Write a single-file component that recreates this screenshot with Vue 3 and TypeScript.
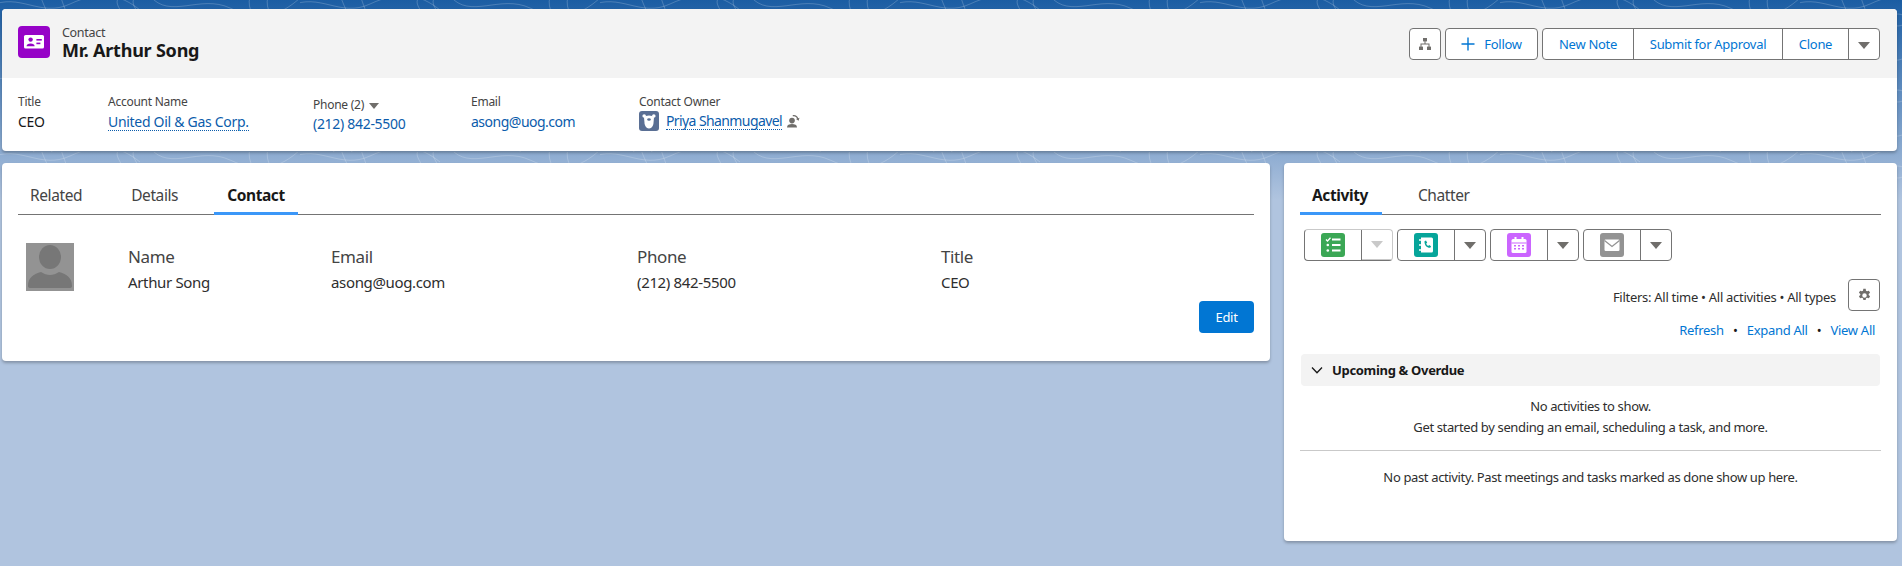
<script setup lang="ts">
const fields = [
  { label: 'Name', value: 'Arthur Song', cls: 'c-name' },
  { label: 'Email', value: 'asong@uog.com', cls: 'c-email' },
  { label: 'Phone', value: '(212) 842-5500', cls: 'c-phone' },
  { label: 'Title', value: 'CEO', cls: 'c-title' },
]
const contours = [
  'M-10 6C20 -8 40 18 70 4S120 -6 140 10',
  'M150 -4C170 20 200 -6 230 8S280 16 300 -2',
  'M20 60C50 40 80 72 110 56S150 50 170 66',
  'M190 54C220 74 250 44 280 60',
  'M40 -6C44 10 52 14 48 30',
  'M60 -6C64 10 70 14 66 30',
  'M250 -4C246 12 258 16 254 30',
  'M268 -4C264 12 276 16 272 30',
  'M120 -4C110 6 130 12 118 24',
  'M136 -4C126 6 146 12 134 24',
  'M30 46C34 58 28 66 34 76',
  'M48 46C52 58 46 66 52 76',
  'M220 44C216 56 226 66 220 76',
  'M90 20a8 6 0 1 0 16 0a8 6 0 1 0 -16 0',
  'M205 60a5 6 0 1 0 10 0a5 6 0 1 0 -10 0',
]
</script>

<template>
  <div class="page">
    <svg class="topo" width="1902" height="200" aria-hidden="true">
      <defs>
        <pattern id="topo" width="300" height="76" patternUnits="userSpaceOnUse">
          <path v-for="(d, i) in contours" :key="i" :d="d" fill="none" stroke="#fff" stroke-opacity=".2" stroke-width="1" />
        </pattern>
      </defs>
      <rect width="1902" height="200" fill="url(#topo)" />
    </svg>

    <section class="card highlights">
      <header class="hl-top">
        <div class="record">
          <span class="rec-icon">
            <svg viewBox="0 0 32 32" width="32" height="32">
              <rect x="6" y="9" width="20" height="13.5" rx="1.6" fill="#fff" />
              <circle cx="12.6" cy="13.6" r="2.2" fill="#9602c7" />
              <path d="M8.6 20.3c0-2 1.6-2.9 4-2.9s4 .9 4 2.9z" fill="#9602c7" />
              <rect x="18.4" y="13" width="5.4" height="1.6" fill="#9602c7" />
              <rect x="18.4" y="16.6" width="4" height="1.6" fill="#9602c7" />
            </svg>
          </span>
          <div>
            <div class="rec-type">Contact</div>
            <h1 class="rec-name">Mr. Arthur Song</h1>
          </div>
        </div>
        <div class="actions">
          <button class="btn square">
            <svg viewBox="0 0 14 14" width="14" height="14" fill="#706e6b">
              <rect x="5" y="1" width="4" height="3.4" />
              <rect x="1" y="9.6" width="4" height="3.4" />
              <rect x="9" y="9.6" width="4" height="3.4" />
              <path d="M6.5 4h1v2.5H11.5V10h-1V7.5h-7V10h-1V6.5h4z" />
            </svg>
          </button>
          <button class="btn follow">
            <svg viewBox="0 0 14 14" width="14" height="14"><path d="M7 .5v13M.5 7h13" stroke="#0176d3" stroke-width="1.4" /></svg>
            Follow
          </button>
          <div class="btn-group">
            <button class="seg w1">New Note</button>
            <button class="seg w2">Submit for Approval</button>
            <button class="seg w3">Clone</button>
            <button class="seg w4"><i class="caret"></i></button>
          </div>
        </div>
      </header>
      <div class="hl-fields">
        <div class="hf f1"><div class="hf-l">Title</div><div class="hf-v">CEO</div></div>
        <div class="hf f2"><div class="hf-l">Account Name</div><a class="hf-v link dotted">United Oil &amp; Gas Corp.</a></div>
        <div class="hf f3 drop"><div class="hf-l">Phone (2) <i class="caret small"></i></div><a class="hf-v link">(212) 842-5500</a></div>
        <div class="hf f4"><div class="hf-l">Email</div><a class="hf-v link">asong@uog.com</a></div>
        <div class="hf f5">
          <div class="hf-l">Contact Owner</div>
          <div class="owner">
            <svg class="bear" viewBox="0 0 20 20" width="20" height="20">
              <rect width="20" height="20" rx="3" fill="#5a6f94" />
              <circle cx="5.2" cy="5" r="1.8" fill="#fff" />
              <circle cx="14.8" cy="5" r="1.8" fill="#fff" />
              <path d="M5 6.500C6 3.800 14 3.800 15 6.500L14.400 13C13.800 16 11.600 17.500 10 17.500S6.200 16 5.600 13z" fill="#fff" />
              <ellipse cx="10" cy="8.500" rx="1.800" ry="1.300" fill="#5a6f94" />
            </svg>
            <a class="hf-v link dotted">Priya Shanmugavel</a>
            <svg class="chown" viewBox="0 0 14 14" width="14" height="14" fill="#706e6b">
              <circle cx="6" cy="6.600" r="2.800" />
              <path d="M1 13.500c0-2.500 2.200-3.400 5-3.400s5 .9 5 3.400z" />
              <path d="M6.600 1.200c2.600-.7 5 .7 5.700 3l1.200-.4-.9 3-2.600-1.800 1.100-.4c-.5-1.600-2.300-2.700-4.100-2.200z" />
            </svg>
          </div>
        </div>
      </div>
    </section>

    <main class="columns">
      <section class="card left">
        <nav class="tabs l-tabs">
          <span class="tab">Related</span>
          <span class="tab">Details</span>
          <span class="tab active">Contact</span>
        </nav>
        <div class="contact-row">
          <svg class="avatar" viewBox="0 0 48 48" width="48" height="48">
            <rect width="48" height="48" fill="#939393" />
            <ellipse cx="24" cy="14" rx="11" ry="12" fill="#777" />
            <path d="M2 43c0-9 6-12 13-14 3 2 6 3 9 3s6-1 9-3c7 2 13 5 13 14 0 1.500-1 2-3 2H5c-2 0-3-.5-3-2z" fill="#777" />
          </svg>
          <div v-for="f in fields" :key="f.label" class="cf" :class="f.cls">
            <div class="cf-l">{{ f.label }}</div>
            <div class="cf-v">{{ f.value }}</div>
          </div>
        </div>
        <div class="edit-row"><button class="edit">Edit</button></div>
      </section>

      <section class="card right">
        <nav class="tabs r-tabs">
          <span class="tab active">Activity</span>
          <span class="tab">Chatter</span>
        </nav>
        <div class="pubs">
          <div class="pub">
            <span class="pub-main">
              <svg viewBox="0 0 24 24" width="24" height="24">
                <rect width="24" height="24" rx="3" fill="#3ba755" />
                <path d="M5 6.500l1.500 1.500 3-3.200" fill="none" stroke="#fff" stroke-width="1.300" />
                <path d="M11 6.500h8.500M11 12h8.500M11 17.500h8.500" stroke="#fff" stroke-width="2" />
                <circle cx="6.800" cy="12" r="1.300" fill="#fff" /><circle cx="6.800" cy="17.500" r="1.300" fill="#fff" />
              </svg>
            </span>
            <span class="pub-drop off"><i class="caret"></i></span>
          </div>
          <div class="pub">
            <span class="pub-main">
              <svg viewBox="0 0 24 24" width="24" height="24">
                <rect width="24" height="24" rx="3" fill="#06a59a" />
                <path d="M7 4.500h10.500a1.500 1.500 0 0 1 1.500 1.500v12a1.500 1.500 0 0 1-1.500 1.500H7z" fill="#fff" />
                <path d="M5 7h2.500M5 12h2.500M5 17h2.500" stroke="#fff" stroke-width="1.500" />
                <path d="M10.500 8.200l1.500-.7 1.200 2.200-1 .8c.3 1.200 1 2 2 2.400l.9-.9 2 1.300-.8 1.500c-3.500.2-6-2.800-5.800-6.600z" fill="#06a59a" />
              </svg>
            </span>
            <span class="pub-drop"><i class="caret"></i></span>
          </div>
          <div class="pub">
            <span class="pub-main">
              <svg viewBox="0 0 24 24" width="24" height="24">
                <rect width="24" height="24" rx="3" fill="#cb65ff" />
                <rect x="4.500" y="6" width="15" height="14" rx="1.500" fill="#fff" />
                <rect x="4.500" y="9.500" width="15" height="1" fill="#cb65ff" />
                <rect x="7.500" y="4" width="2" height="3.500" fill="#fff" /><rect x="14.500" y="4" width="2" height="3.500" fill="#fff" />
                <path d="M7 12h2v1.500H7zM11 12h2v1.500h-2zM15 12h2v1.500h-2zM7 15h2v1.500H7zM11 15h2v1.500h-2zM15 15h2v1.500h-2z" fill="#cb65ff" />
              </svg>
            </span>
            <span class="pub-drop"><i class="caret"></i></span>
          </div>
          <div class="pub">
            <span class="pub-main">
              <svg viewBox="0 0 24 24" width="24" height="24">
                <rect width="24" height="24" rx="3" fill="#939393" />
                <rect x="4.500" y="6.500" width="15" height="11.500" rx="1.200" fill="#fff" />
                <path d="M4.500 7.500L12 13.500l7.500-6" fill="none" stroke="#939393" stroke-width="1.300" />
              </svg>
            </span>
            <span class="pub-drop"><i class="caret"></i></span>
          </div>
        </div>
        <div class="filters">
          <span class="filter-text">Filters: All time • All activities • All types</span>
          <button class="btn square gear">
            <svg viewBox="0 0 14 14" width="15" height="15">
              <path fill="#706e6b" fill-rule="evenodd" d="M5.900.8h2.200l.3 1.700 1 .6 1.700-.6 1.100 1.900-1.300 1.100v1.100l1.300 1.100-1.100 1.900-1.700-.6-1 .6-.3 1.700H5.900l-.3-1.700-1-.6-1.700.6-1.100-1.900 1.300-1.100V5.500L1.800 4.400l1.100-1.900 1.700.6 1-.6zM7 4.900a2.100 2.100 0 1 0 0 4.200 2.100 2.100 0 0 0 0-4.200z" />
            </svg>
          </button>
        </div>
        <div class="links">
          <a>Refresh</a><span class="dot">•</span><a>Expand All</a><span class="dot">•</span><a>View All</a>
        </div>
        <div class="section-bar">
          <svg viewBox="0 0 14 14" width="14" height="14"><path d="M2 4.500L7 9.800l5-5.300" fill="none" stroke="#181818" stroke-width="1.300" /></svg>
          <span>Upcoming &amp; Overdue</span>
        </div>
        <div class="empty upcoming">
          <p>No activities to show.</p>
          <p>Get started by sending an email, scheduling a task, and more.</p>
        </div>
        <div class="empty past"><p>No past activity. Past meetings and tasks marked as done show up here.</p></div>
      </section>
    </main>
  </div>
</template>

<style>
html, body { margin: 0; background: #b0c4df; }
</style>

<style scoped>
* { box-sizing: border-box; }
.page {
  position: relative;
  width: 1902px;
  height: 566px;
  overflow: hidden;
  padding: 9px 5px 0 2px;
  background: linear-gradient(180deg, #1b5da3 0, #b0c4df 200px);
  font-family: "Noto Sans", "Open Sans", sans-serif;
  color: #181818;
  font-size: 13px;
}
.topo { position: absolute; left: 0; top: 0; }
.card {
  position: relative;
  background: #fff;
  border-radius: 4px;
  box-shadow: 0 2px 3px rgba(0, 0, 0, .25);
}
.highlights { height: 142px; overflow: hidden; }
.hl-top {
  height: 69px;
  background: #f3f3f3;
  display: flex;
  justify-content: space-between;
  padding: 17px 17px 0 16px;
}
.record { display: flex; gap: 12px; }
.rec-icon { width: 32px; height: 32px; border-radius: 4px; background: #9602c7; display: block; }
.rec-icon svg { display: block; }
.rec-type { font-size: 12.500px; line-height: 15px; color: #444; margin-top: -1px; letter-spacing: -.3px; }
.rec-name { margin: 0; font-size: 18px; line-height: 20px; font-weight: 700; letter-spacing: -.22px; }
.actions { display: flex; gap: 4px; padding-top: 2px; height: 34px; }
.btn {
  height: 32px;
  background: #fff;
  border: 1px solid #747474;
  border-radius: 4px;
  font: inherit;
  padding: 0;
  color: #0176d3;
  display: flex;
  align-items: center;
  justify-content: center;
  letter-spacing: -.3px;
}
.square { width: 32px; }
.follow { width: 93px; gap: 9px; }
.btn-group { display: flex; height: 32px; border: 1px solid #747474; border-radius: 4px; background: #fff; width: 338px; }
.seg {
  border: 0;
  background: none;
  border-right: 1px solid #747474;
  font: inherit;
  color: #0176d3;
  padding: 0;
  letter-spacing: -.3px;
}
.w1 { width: 91px; }
.w2 { width: 149px; }
.w3 { width: 66px; }
.w4 { flex: 1; border-right: 0; }
.caret {
  display: inline-block;
  width: 0;
  height: 0;
  border-left: 6px solid transparent;
  border-right: 6px solid transparent;
  border-top: 7px solid #706e6b;
}
.caret.small { border-left-width: 5.500px; border-right-width: 5.500px; border-top-width: 6px; margin-left: 2px; }
.hl-fields { position: relative; display: flex; padding: 16px 0 0 16px; }
.hf-l { font-size: 12px; line-height: 16px; color: #444; letter-spacing: -.25px; }
.hf-v { display: inline-block; font-size: 14px; line-height: 18px; margin-top: 3px; letter-spacing: -.3px; }
.f1 { width: 90px; }
.f2 { width: 205px; }
.f3 { width: 158px; padding-top: 3px; }
.f3 .hf-v { margin-top: 2px; }
.f4 { width: 168px; }
.f4 .hf-v { letter-spacing: -.5px; }
.link { color: #0b5cab; }
.dotted { border-bottom: 1px dotted #0b5cab; line-height: 17px; }
.owner { display: flex; align-items: center; margin-top: 1px; height: 20px; }
.owner .hf-v { margin: 0 0 0 7px; letter-spacing: -.6px; }
.chown { margin-left: 4px; }
.columns { display: grid; grid-template-columns: 1268px 613px; gap: 14px; margin-top: 12px; align-items: start; }
.left { height: 198px; padding: 0 16px; }
.right { height: 378px; padding: 0 16px; }
.tabs {
  height: 52px;
  border-bottom: 1px solid #747474;
  display: flex;
  align-items: flex-end;
  font-size: 15.500px;
  color: #444;
  letter-spacing: -.4px;
}
.tab { display: block; height: 32px; line-height: 24px; padding: 0 12px; margin-bottom: -1px; }
.tab.active { font-weight: 700; color: #181818; box-shadow: inset 0 -3px 0 #3b97f8; }
.l-tabs { gap: 25px; }
.l-tabs .tab.active { padding: 0 13px; margin-left: -1px; }
.r-tabs { gap: 24px; }
.r-tabs .tab.active { padding: 0 14px 0 12px; }
.contact-row { position: relative; height: 86px; }
.avatar { position: absolute; left: 8px; top: 28px; display: block; }
.cf { position: absolute; top: 31px; }
.cf-l { font-size: 17px; line-height: 22px; color: #444; letter-spacing: -.4px; }
.cf-v { font-size: 15px; line-height: 22px; margin-top: 3px; letter-spacing: -.35px; color: #2e2e2e; }
.c-name { left: 110px; }
.c-email { left: 313px; }
.c-phone { left: 619px; }
.c-title { left: 923px; }
.edit-row { display: flex; justify-content: flex-end; }
.edit {
  width: 55px;
  height: 32px;
  background: #0176d3;
  color: #fff;
  border: 0;
  border-radius: 4px;
  font: inherit;
  letter-spacing: -.3px;
}
.pubs { display: flex; gap: 4px; margin-top: 14px; padding-left: 4px; }
.pub { display: flex; height: 32px; width: 89px; border: 1px solid #747474; border-radius: 4px; }
.pub-main { width: 57px; display: flex; align-items: center; justify-content: center; border-right: 1px solid #747474; }
.pub-main svg { display: block; }
.pub-drop { flex: 1; display: flex; align-items: center; justify-content: center; }
.pub-drop.off .caret { border-top-color: #c9c9c9; }
.pub:first-child { border-right-color: #c9c9c9; border-top-color: #c9c9c9; }
.pub:first-child .pub-drop { border-bottom: 1px solid #c9c9c9; }
.filters { display: flex; justify-content: flex-end; align-items: center; gap: 12px; margin-top: 18px; padding-right: 1px; letter-spacing: -.28px; color: #2e2e2e; }
.filter-text { padding-top: 3px; }
.gear { flex: none; }
.links { display: flex; justify-content: flex-end; padding-right: 6px; margin-top: 10px; line-height: 18px; letter-spacing: -.3px; }
.links a { color: #0176d3; }
.dot { width: 23px; text-align: center; color: #181818; }
.section-bar {
  height: 32px;
  margin-top: 15px;
  margin-left: 1px;
  margin-right: 1px;
  padding-left: 9px;
  background: #f3f3f3;
  border-radius: 4px;
  display: flex;
  align-items: center;
  gap: 8px;
  font-weight: 700;
  letter-spacing: -.32px;
}
.empty { text-align: center; letter-spacing: -.36px; color: #2e2e2e; }
.empty p { margin: 0; line-height: 21px; }
.upcoming { padding-top: 10px; height: 65px; border-bottom: 1px solid #c9c9c9; }
.past { padding-top: 16px; }
</style>
